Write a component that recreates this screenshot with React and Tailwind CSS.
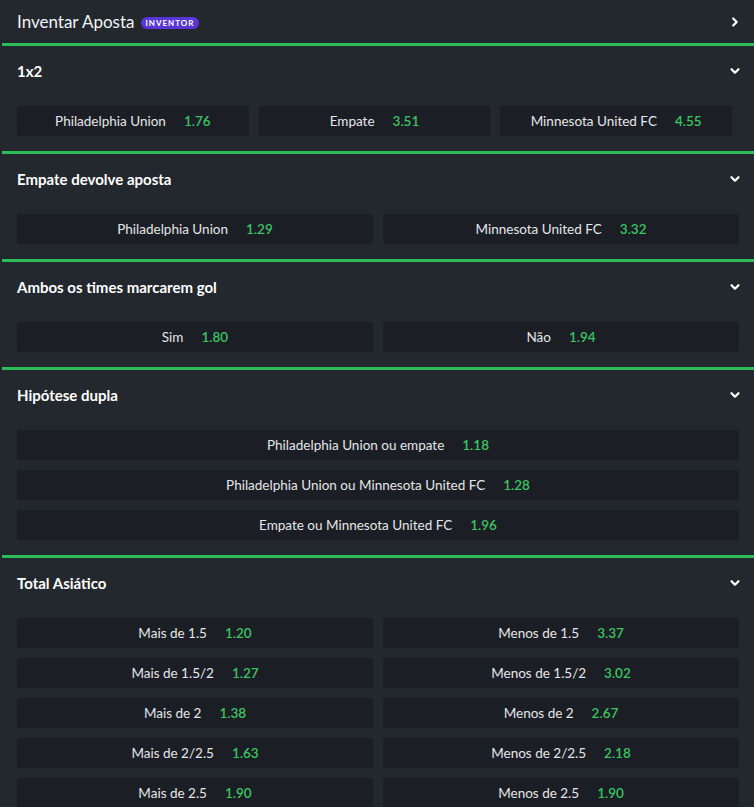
const markets = [
  {
    title: "1x2",
    cols: 3,
    rows: [
      [
        ["Philadelphia Union", "1.76"],
        ["Empate", "3.51"],
        ["Minnesota United FC", "4.55"],
      ],
    ],
  },
  {
    title: "Empate devolve aposta",
    cols: 2,
    rows: [
      [
        ["Philadelphia Union", "1.29"],
        ["Minnesota United FC", "3.32"],
      ],
    ],
  },
  {
    title: "Ambos os times marcarem gol",
    cols: 2,
    rows: [
      [
        ["Sim", "1.80"],
        ["Não", "1.94"],
      ],
    ],
  },
  {
    title: "Hipótese dupla",
    cols: 1,
    rows: [
      [["Philadelphia Union ou empate", "1.18"]],
      [["Philadelphia Union ou Minnesota United FC", "1.28"]],
      [["Empate ou Minnesota United FC", "1.96"]],
    ],
  },
  {
    title: "Total Asiático",
    cols: 2,
    rows: [
      [["Mais de 1.5", "1.20"], ["Menos de 1.5", "3.37"]],
      [["Mais de 1.5/2", "1.27"], ["Menos de 1.5/2", "3.02"]],
      [["Mais de 2", "1.38"], ["Menos de 2", "2.67"]],
      [["Mais de 2/2.5", "1.63"], ["Menos de 2/2.5", "2.18"]],
      [["Mais de 2.5", "1.90"], ["Menos de 2.5", "1.90"]],
    ],
  },
];

function Chevron({ dir = "down" }) {
  return (
    <svg width="12" height="12" viewBox="0 0 12 12" className={dir === "right" ? "-rotate-90" : ""}>
      <polyline
        points="2.5,4.2 6,7.7 9.5,4.2"
        fill="none"
        stroke="#ffffff"
        strokeWidth="2.2"
        strokeLinecap="round"
        strokeLinejoin="round"
      />
    </svg>
  );
}

function OddButton({ label, odd }) {
  return (
    <button className="h-[30px] bg-[#1b1e24] rounded-[2px] flex items-center justify-center gap-[18px] text-[13.5px] text-[#e4e6e9]">
      <span>{label}</span>
      <span className="text-[#3cc463] font-semibold">{odd}</span>
    </button>
  );
}

function Market({ market }) {
  const grid =
    market.cols === 3 ? "grid-cols-3 pr-[22px]" : market.cols === 2 ? "grid-cols-2 pr-[15px]" : "grid-cols-1 pr-[15px]";
  return (
    <section className="border-t-[3px] border-[#2dbd58]">
      <div className="h-[50px] flex items-center justify-between pl-[15px] pr-[13px]">
        <h3 className="text-[15px] font-bold text-white">{market.title}</h3>
        <Chevron />
      </div>
      <div className="flex flex-col gap-[10px] mt-[10px] pb-[15px] pl-[15px]">
        {market.rows.map((row, i) => (
          <div key={i} className={`grid gap-[10px] ${grid}`}>
            {row.map(([label, odd]) => (
              <OddButton key={label} label={label} odd={odd} />
            ))}
          </div>
        ))}
      </div>
    </section>
  );
}

export default function App() {
  return (
    <div className="min-h-screen bg-[#23272e] font-['Lato','Noto_Sans',sans-serif] pl-[2px]">
      <div className="h-[43px] flex items-center justify-between pl-[15px] pr-[13px]">
        <div className="flex items-center gap-[6px]">
          <span className="text-[17px] text-[#f2f3f5]">Inventar Aposta</span>
          <span className="bg-[#5a36d6] text-white text-[8px] font-bold tracking-[0.12em] rounded-full px-[5px] h-[12px] flex items-center mt-[2px]">
            INVENTOR
          </span>
        </div>
        <Chevron dir="right" />
      </div>
      {markets.map((m) => (
        <Market key={m.title} market={m} />
      ))}
    </div>
  );
}
